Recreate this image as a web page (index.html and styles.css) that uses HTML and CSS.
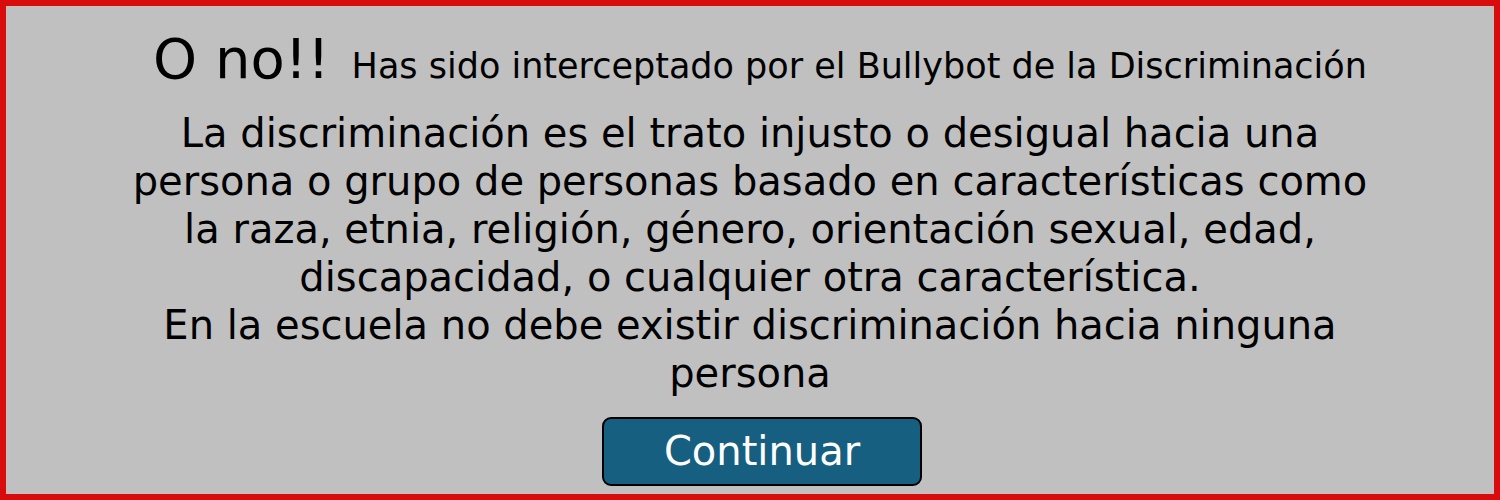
FILE: index.html
```html
<!DOCTYPE html>
<html lang="es">
<head>
<meta charset="utf-8">
<title>Bullybot</title>
<link rel="stylesheet" href="styles.css">
</head>
<body>
<div class="frame">
  <div class="title">
    <span class="big">O no!!</span>
    <span class="sub">Has sido interceptado por el Bullybot de la Discriminación</span>
  </div>
  <p class="text">La discriminación es el trato injusto o desigual hacia una persona o grupo de personas basado en características como la raza, etnia, religión, género, orientación sexual, edad, discapacidad, o cualquier otra característica.<br>En la escuela no debe existir discriminación hacia ninguna persona</p>
  <button class="btn">Continuar</button>
</div>
</body>
</html>
```

FILE: styles.css
```css
html, body {
  margin: 0;
  padding: 0;
}
body {
  width: 1500px;
  height: 500px;
  overflow: hidden;
  font-family: "DejaVu Sans", Verdana, sans-serif;
  color: #000;
}
.frame {
  box-sizing: border-box;
  width: 1500px;
  height: 500px;
  border: 6px solid #d80c0c;
  background: #c0c0c0;
  display: flex;
  flex-direction: column;
  align-items: center;
  padding-top: 22px;
}
.title {
  display: flex;
  align-items: baseline;
  gap: 22px;
  line-height: 1.1;
  margin-left: 20px;
}
.big {
  font-size: 56px;
}
.sub {
  font-size: 35px;
}
.text {
  margin: 19px 0 0;
  width: 1240px;
  text-align: center;
  font-size: 40px;
  line-height: 48px;
}
.btn {
  margin-top: 20px;
  margin-left: 24px;
  width: 320px;
  height: 69px;
  background: #165f80;
  color: #fff;
  border: 2px solid #000;
  border-radius: 9px;
  font-family: "DejaVu Sans", Verdana, sans-serif;
  font-size: 40px;
  padding: 0;
}
```
